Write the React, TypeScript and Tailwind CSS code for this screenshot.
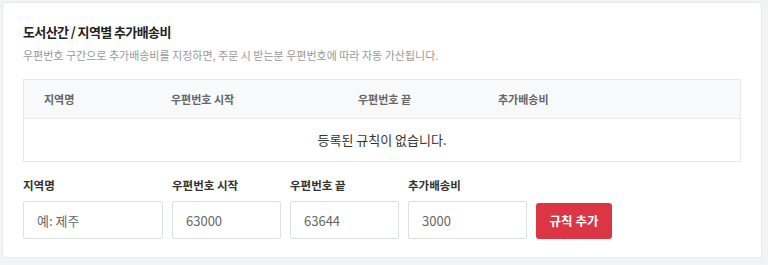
const font = { fontFamily: '"Noto Sans CJK KR", "Noto Sans", sans-serif' }

const columns = [
  { label: '지역명', width: 'w-[127px]' },
  { label: '우편번호 시작', width: 'w-[187px]' },
  { label: '우편번호 끝', width: 'w-[140px]' },
  { label: '추가배송비', width: 'flex-1' },
]

const fields = [
  { label: '지역명', placeholder: '예: 제주', width: 'w-[140px]' },
  { label: '우편번호 시작', placeholder: '63000', width: 'w-[109px]' },
  { label: '우편번호 끝', placeholder: '63644', width: 'w-[109px]' },
  { label: '추가배송비', placeholder: '3000', width: 'w-[119px]' },
]

export default function App() {
  return (
    <div className="h-[265px] w-[768px] bg-[#f1f3f5] pl-[2px] pt-[2px]" style={font}>
      <div className="w-[760px] rounded-[3px] border border-[#e6e8eb] bg-white px-5 pb-[18px] pt-[20px]">
        <h2 className="text-[13px] font-bold leading-[18px] tracking-[-0.6px] text-[#222]">
          도서산간 / 지역별 추가배송비
        </h2>
        <p className="mt-[7px] text-[11px] leading-[15px] text-[#999]">
          우편번호 구간으로 추가배송비를 지정하면, 주문 시 받는분 우편번호에 따라 자동 가산됩니다.
        </p>

        <div className="mt-[16px] border border-[#e6e8eb]">
          <div className="flex h-[39px] items-center border-b border-[#e6e8eb] bg-[#f8f9fa] text-[11px] font-bold text-[#666]">
            {columns.map((c) => (
              <div key={c.label} className={`${c.width} pl-5`}>
                {c.label}
              </div>
            ))}
          </div>
          <div className="flex h-[42px] items-center justify-center text-[13px] text-[#333]">
            등록된 규칙이 없습니다.
          </div>
        </div>

        <div className="mt-[15px] flex items-end gap-[9px]">
          {fields.map((f) => (
            <div key={f.label} className="flex flex-col">
              <label className="text-[11.5px] font-bold leading-[16px] text-[#333]">{f.label}</label>
              <input
                className={`${f.width} mt-[8px] h-[38px] rounded-[2px] border border-[#dcdfe3] px-[13px] text-[13px] text-[#555] placeholder:text-[#666] outline-none`}
                placeholder={f.placeholder}
                style={font}
              />
            </div>
          ))}
          <button
            className="h-[36px] w-[76px] rounded-[3px] bg-[#dc3545] text-[12.5px] font-bold text-white"
            style={font}
          >
            규칙 추가
          </button>
        </div>
      </div>
    </div>
  )
}
